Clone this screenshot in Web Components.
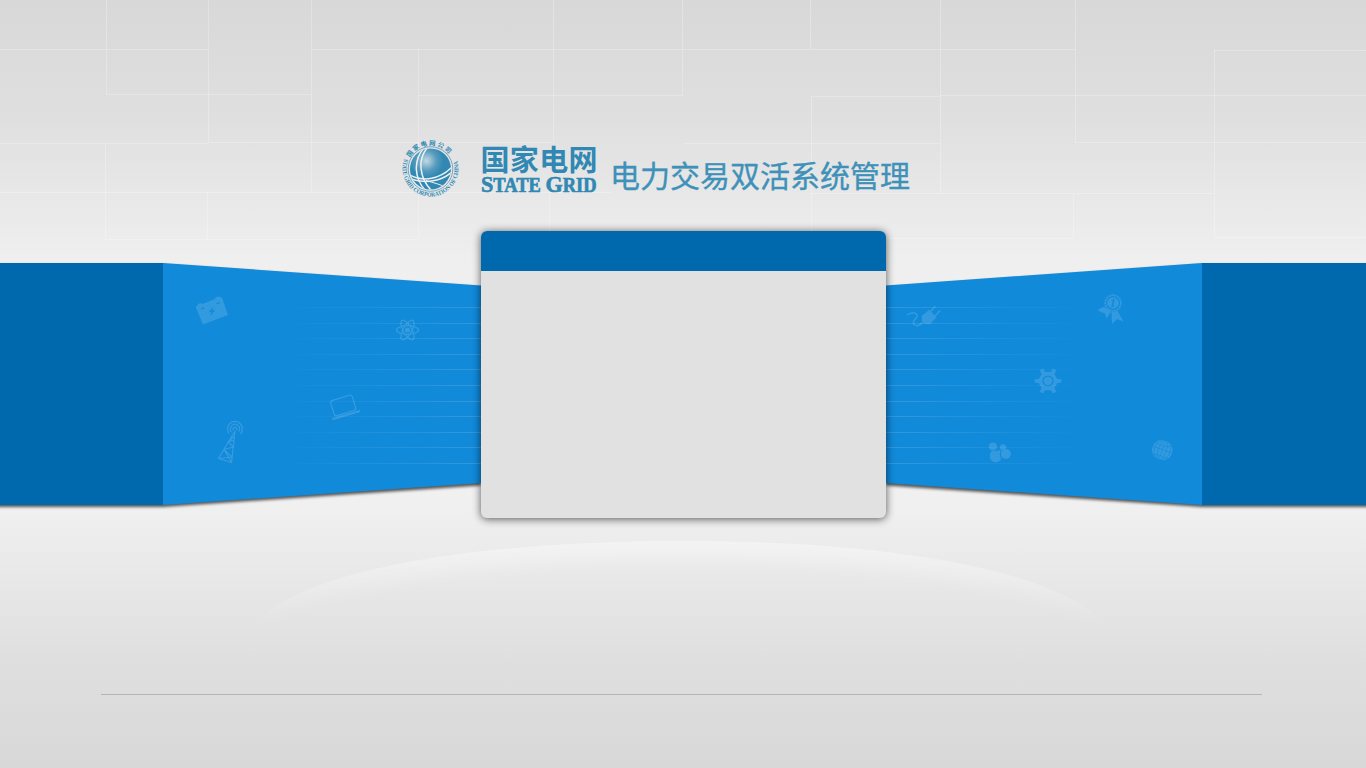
<!DOCTYPE html>
<html lang="zh-CN">
<head>
<meta charset="utf-8">
<title>电力交易双活系统管理</title>
<style>
html,body{margin:0;height:100%;overflow:hidden}
body{font-family:"Noto Sans CJK SC","Liberation Sans",sans-serif}
</style>
</head>
<body>
<login-page>
  <brand-header slot="header">电力交易双活系统管理</brand-header>
  <side-ribbon slot="main" side="left"></side-ribbon>
  <login-card slot="main"></login-card>
  <side-ribbon slot="main" side="right"></side-ribbon>
</login-page>
<script>
const define = (name, html) => customElements.define(name, class extends HTMLElement {
  constructor() {
    super();
    const t = document.createElement('template');
    t.innerHTML = typeof html === 'function' ? html(this) : html;
    this.attachShadow({mode: 'open'}).append(t.content.cloneNode(true));
  }
});

define('page-backdrop', `
<style>:host{display:block;width:1366px;height:768px}svg{display:block}</style>
<svg width="1366" height="768" viewBox="0 0 1366 768">
  <defs>
    <linearGradient id="bg" x1="0" y1="0" x2="0" y2="1">
      <stop offset="0" stop-color="#d8d8d8"/><stop offset=".15" stop-color="#dfdfdf"/>
      <stop offset=".34" stop-color="#efefef"/><stop offset=".5" stop-color="#f3f3f3"/><stop offset=".66" stop-color="#f0f0f0"/>
      <stop offset=".86" stop-color="#dfdfdf"/><stop offset="1" stop-color="#d8d8d8"/>
    </linearGradient>
    <linearGradient id="arcFade" gradientUnits="userSpaceOnUse" x1="0" y1="540" x2="0" y2="626">
      <stop offset="0" stop-color="#fff" stop-opacity=".4"/><stop offset="1" stop-color="#fff" stop-opacity="0.03"/>
    </linearGradient>
    <filter id="soft" x="-10%" y="-30%" width="120%" height="160%"><feGaussianBlur stdDeviation="9"/></filter>
    <mask id="crescent" maskUnits="userSpaceOnUse" x="200" y="500" width="960" height="200">
      <rect x="200" y="500" width="960" height="200" fill="#fff"/>
      <ellipse cx="679" cy="648" rx="425" ry="88" fill="#000" filter="url(#soft)"/>
    </mask>
  </defs>
  <rect width="1366" height="768" fill="url(#bg)"/>
  <path fill="none" stroke="#fff" stroke-opacity=".25" stroke-width="1" d="M0 49.5H208M311 49.5H1075M1214 50.5H1366M106 94.5H311M418 95.5H683M811 96.5H940M940 95.5H1366M208 142.5H554M0 143.5H208M683 143.5H940M1075 142.5H1366M0 192.5H611M811 193.5H1214M105 239.5H418M886 238.5H1073M1214 237.5H1366M106.500 0V94M208.500 0V142M311.500 0V192M418.500 49V239M553.500 0V142M682.500 0V95M810.500 0V49M940.500 0V193M1075.500 0V143M1214.500 50V237M105.500 143V239M207.500 192V239M549.500 192V231M811.500 96V231M1073.500 194V238"/>
  <path fill="url(#arcFade)" mask="url(#crescent)" d="M252 628C290 575 450 541 683 541C900 541 1065 572 1108 628Z"/>
</svg>`);

define('state-grid-logo', `
<style>:host{display:block;width:200px;height:62px}svg{display:block;overflow:visible}
.cn{font:700 29px "Noto Sans CJK SC",sans-serif}
.en{font-family:"Liberation Serif",serif;font-weight:700}
.ring{font:700 6.2px "Liberation Serif",serif}
.ringcn{font:700 6.4px "Noto Sans CJK SC",sans-serif}</style>
<svg width="200" height="62" viewBox="400 138 200 62" fill="#3088b3">
  <defs>
    <radialGradient id="ball" cx=".4" cy=".3" r=".42"><stop offset="0" stop-color="#c3d8e2"/><stop offset=".2" stop-color="#a0c4d6"/><stop offset=".6" stop-color="#559bbd"/><stop offset="1" stop-color="#3088b3"/></radialGradient>
    <clipPath id="disc"><circle cx="430.500" cy="169" r="20.500"/></clipPath>
    <path id="top" d="M409 159.500A23.400 23.400 0 0 1 452 159.500"/>
    <path id="bottom" d="M404.400 158.500A28 28 0 1 0 456.600 158.500"/>
  </defs>
  <circle cx="430.500" cy="169" r="20.500" fill="url(#ball)"/>
  <circle cx="430.500" cy="169" r="22.300" fill="none" stroke="#3088b3" stroke-width=".65"/>
  <g clip-path="url(#disc)" fill="none" stroke="#edf1f3" stroke-width="1.500">
    <path d="M424 148C413 160 414 179 426 191M428 147C417 159 419 179 433 192"/>
    <path d="M408 174C423 183 441 179 453 166M409 178.500C425 184 442 182 454 170" />
    <path d="M426 180.500C434 183 440 184 447 188" stroke-width="1"/>
  </g>
  <text class="ringcn"><textPath href="#top" startOffset="2" textLength="46">国家电网公司</textPath></text>
  <text class="ring"><textPath href="#bottom" startOffset="0" textLength="106" lengthAdjust="spacingAndGlyphs">STATE GRID CORPORATION OF CHINA</textPath></text>
  <text class="cn" x="480.500" y="171" textLength="117">国家电网</text>
  <text class="en" x="481" y="192.300" textLength="115.500" lengthAdjust="spacingAndGlyphs" stroke="#3088b3" stroke-width=".65"><tspan font-size="24">S</tspan><tspan font-size="20">TATE </tspan><tspan font-size="24">G</tspan><tspan font-size="20">RID</tspan></text>
</svg>`);

define('brand-header', `
<style>:host{display:flex;box-sizing:border-box;height:231px;padding:138px 0 0 400px;color:#3e91b8}
h1{margin:14px 0 0 10px;font:400 30px/44px "Noto Sans CJK SC",sans-serif;white-space:nowrap;-webkit-text-stroke:.35px currentColor}</style>
<state-grid-logo></state-grid-logo><h1><slot></slot></h1>`);

define('login-card', `
<style>:host{display:flex;flex-direction:column;position:relative;z-index:1;width:405px;height:287px;border-radius:6px;background:#e1e1e1;box-shadow:0 1px 8px rgba(0,0,0,.65);overflow:hidden}
header{height:40px;background:#0068ad}</style>
<header><slot name="title"></slot></header><slot></slot>`);

const rules = (a, b) => [307.5,323.5,338.5,354.5,369.5,385.5,401.5,416.5,432.5,447.5,463.5]
  .map(y => `<rect x="${a}" y="${y - .5}" width="${b - a}" height="1" fill="url(#fade)"/>`).join('');

const teeth = [0,60,120,180,240,300]
  .map(a => `<path d="M1055 377.500L1057 379L1060 379Q1061.500 379 1061.500 381T1060 383L1057 383L1055 384.500Z" transform="rotate(${a} 1048 381)"/>`).join('');

const leftIcons = `
<g fill="#fff" opacity=".14">
  <path fill-rule="evenodd" d="M195.500 306.500L197.500 305.500L198 304L201 303L202 304L215 299L215.500 297.500L219 296.200L220.500 297.500L222 297.500L228 315L203 324.500ZM213.500 306.500L208.500 312.500L211.500 311.800L210 316L215.500 309.800L212.300 310.500ZM201 308.500L204 307.300L204.300 308.500L201.500 309.500ZM216 303.500L219.500 302L220 303L216.500 304.500Z"/>
</g>
<g fill="none" stroke="#fff" stroke-width="1.200" opacity=".16">
  <ellipse cx="407.500" cy="330" rx="11" ry="4.300"/><ellipse cx="407.500" cy="330" rx="11" ry="4.300" transform="rotate(60 407.500 330)"/><ellipse cx="407.500" cy="330" rx="11" ry="4.300" transform="rotate(120 407.500 330)"/>
  <circle cx="407.500" cy="330" r="1.300" stroke-width="2.500"/>
  <rect x="332" y="397.500" width="22.500" height="16" rx="2.500" transform="rotate(-17 343 405.500)"/>
  <path d="M332.300 419.300L360 411" stroke-width="2.200"/>
  <path d="M235 431L218.500 458.500L231.500 462.500L235 431M218.500 458.500L232 457L224 449.500L233.500 447L228 442L234 440M231.500 462.500L224 449.500M228 442L234.500 436"/>
  <path d="M233.500 430.500A2 2 0 1 1 236.500 430.500M231.500 432A4.600 4.600 0 1 1 238.800 431.500M229 433.500A7.500 7.500 0 1 1 240.500 434"/>
</g>`;

const rightIcons = `
<g fill="#fff" opacity=".14">
  <path d="M921.800 316L929.200 309.800L936.500 317.500L930 324L924.500 323.800L922 320.500Z"/>
  <path d="M907 315C911.500 311.800 917.500 312.500 917 316.500C916 319.500 911.500 321 914 324.500C917 327 921 325 923 322M930.500 311.500L935.500 306M935 316L940 310.500" fill="none" stroke="#fff" stroke-width="1.500"/>
  ${teeth}
  <circle cx="1048" cy="381" r="7.400" fill="none" stroke="#fff" stroke-width="3.600"/><circle cx="1048" cy="381" r="4.300"/>
  <circle cx="993" cy="446.600" r="4"/><circle cx="1003" cy="447.300" r="3"/><circle cx="1005.800" cy="454" r="5"/>
  <path d="M992 450.800Q996 451.500 1001 449.800Q998.300 454.500 1001.300 458.700Q999.500 462.300 995 462.300Q989.800 461.500 989.800 456Q989.800 452.500 992 450.800Z"/>
  <circle cx="1162.300" cy="450" r="10.300"/>
  <path d="M1097.500 310L1103 307L1105 307.500L1111 311.500L1106.500 318.500L1105 313.500L1101 312ZM1111.500 312L1117.500 311L1123.500 321.500L1117 319L1112 324Z"/>
  <circle cx="1113" cy="303" r="5.800"/>
  <circle cx="1113" cy="303" r="7.800" fill="none" stroke="#fff" stroke-width="1.800" stroke-dasharray="2.300 .6"/>
</g>
<text x="1109.800" y="307" font-family="Liberation Serif,serif" font-style="italic" font-weight="700" font-size="12" fill="#118ada">1</text>
<g fill="none" stroke="#118ada" stroke-opacity=".7" stroke-width=".8">
  <ellipse cx="1162.300" cy="450" rx="4" ry="10.300" transform="rotate(20 1162.300 450)"/><ellipse cx="1162.300" cy="450" rx="8" ry="10.300" transform="rotate(20 1162.300 450)"/>
  <path d="M1166 440L1158.500 460M1152.500 446L1172 453M1155 441.500Q1163 448 1172 446.500M1153 454Q1161 455 1168 459"/>
</g>`;

define('side-ribbon', el => {
  const left = el.getAttribute('side') === 'left';
  const [x, w] = left ? [0, 481] : [886, 480];
  return `
<style>:host{display:block;width:${w}px;height:242px;margin-top:32px}svg{display:block;overflow:visible}</style>
<svg width="${w}" height="242" viewBox="${x} 263 ${w} 242">
  <defs>
    <linearGradient id="fade" gradientUnits="userSpaceOnUse" x1="${left ? 270 : 1095}" y1="0" x2="${left ? 481 : 886}" y2="0">
      <stop offset="0" stop-color="#fff" stop-opacity="0"/><stop offset=".5" stop-color="#fff" stop-opacity=".06"/><stop offset="1" stop-color="#fff" stop-opacity=".13"/>
    </linearGradient>
    <filter id="shade" filterUnits="userSpaceOnUse" x="${x - 10}" y="250" width="${w + 20}" height="275"><feGaussianBlur stdDeviation="1.700"/></filter>
  </defs>
  <path fill="#000" fill-opacity=".65" filter="url(#shade)" d="${left ? 'M-10 265H163L481 287.500V485.500L163 507H-10Z' : 'M1376 265H1202L886 287.500V485.500L1202 507H1376Z'}"/>
  <path fill="#118ada" d="${left ? 'M163 263L481 285.500V483L163 505Z' : 'M1202 263L886 285.500V483L1202 505Z'}"/>
  <rect fill="#0068ad" x="${left ? 0 : 1202}" y="263" width="${left ? 163 : 164}" height="242"/>
  ${left ? rules(270, 481) + leftIcons : rules(886, 1095) + rightIcons}
</svg>`;
});

define('login-page', `
<style>:host{display:grid;width:1366px;height:768px;overflow:hidden}
page-backdrop,.content{grid-area:1/1}
.content{position:relative;display:flex;flex-direction:column}
main{display:flex;align-items:flex-start;height:287px}
footer{margin:176px 104px 0 101px;border-top:1px solid #b5b5b5}</style>
<page-backdrop></page-backdrop>
<div class="content"><slot name="header"></slot><main><slot name="main"></slot></main><footer></footer></div>`);
</script>
</body>
</html>
